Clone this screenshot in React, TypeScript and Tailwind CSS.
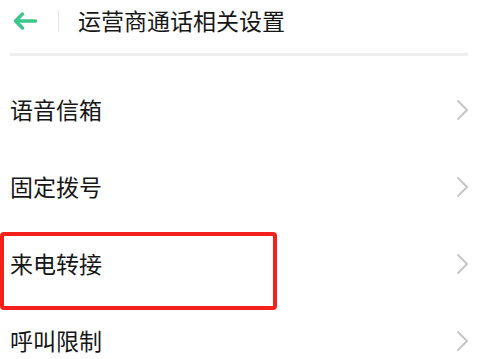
import React from "react";

const items = ["语音信箱", "固定拨号", "来电转接", "呼叫限制"];

function Chevron() {
  return (
    <svg width="14" height="22" viewBox="0 0 14 22" fill="none">
      <path d="M2 2 L11 11 L2 20" stroke="#c6c6c6" strokeWidth="2" strokeLinecap="round" strokeLinejoin="round" />
    </svg>
  );
}

export default function App() {
  return (
    <div
      className="relative w-[491px] h-[359px] overflow-hidden bg-white text-[#161616]"
      style={{ fontFamily: '"Noto Sans CJK SC", "Noto Sans", sans-serif' }}
    >
      {/* header */}
      <div className="flex items-center h-[41px] pl-[12px]">
        <svg width="26" height="20" viewBox="0 0 26 20" fill="none">
          <path d="M23.5 10 H3.5 M10.5 3 L3.5 10 L10.5 17" stroke="#3dc68a" strokeWidth="3.5" strokeLinecap="round" strokeLinejoin="round" />
        </svg>
        <div className="ml-[20px] w-px h-[22px] bg-[#e4e4e4]" />
        <div className="ml-[19px] text-[23px] leading-none">运营商通话相关设置</div>
      </div>
      <div className="mx-[10px] mt-[12px] w-[458px] h-[3px] bg-[#eeeeee]" />

      {/* list */}
      <div className="pt-[15px]">
        {items.map((t) => (
          <div key={t} className="flex items-center justify-between h-[77px] pl-[10px] pr-[21px]">
            <span className="text-[23px] leading-none">{t}</span>
            <Chevron />
          </div>
        ))}
      </div>

      {/* highlight box */}
      <div className="absolute left-0 top-[232px] w-[277px] h-[78px] border-[4px] border-[#f5201c] rounded-[4px]" />
    </div>
  );
}
